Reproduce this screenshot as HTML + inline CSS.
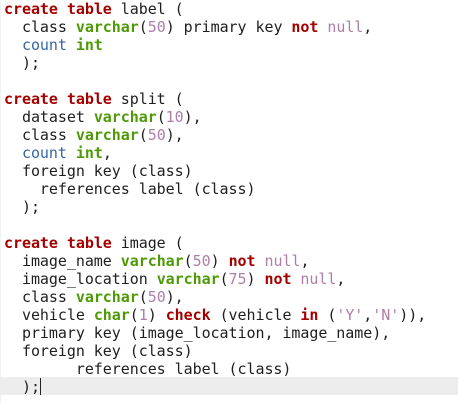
<!DOCTYPE html>
<html><head><style>
html,body{margin:0;padding:0;background:#fff;width:458px;height:403px;overflow:hidden}
pre{margin:0;position:absolute;left:4px;top:0;font-family:"DejaVu Sans Mono","Liberation Mono",monospace;font-size:15px;line-height:18px;letter-spacing:-0.05px;color:#1e1e1e}
.k{color:#a40000;font-weight:bold}
.t{color:#4e9a06;font-weight:bold}
.n{color:#ad7fa8}
.b{color:#3465a4}
.hl{position:absolute;left:0;top:377px;width:458px;height:18px;background:#ededed}
.cur{position:absolute;left:40px;top:378px;width:1px;height:17px;background:#222}
.edge{position:absolute;left:0;top:0;width:1px;height:403px;background:#f2f2f2}
</style></head><body>
<div class="edge"></div>
<div class="hl"></div>
<pre><span class="k">create</span> <span class="k">table</span> label (
  class <span class="t">varchar</span>(<span class="n">50</span>) primary key <span class="k">not</span> <span class="n">null</span>,
  <span class="b">count</span> <span class="t">int</span>
  );

<span class="k">create</span> <span class="k">table</span> split (
  dataset <span class="t">varchar</span>(<span class="n">10</span>),
  class <span class="t">varchar</span>(<span class="n">50</span>),
  <span class="b">count</span> <span class="t">int</span>,
  foreign key (class)
    references label (class)
  );

<span class="k">create</span> <span class="k">table</span> image (
  image_name <span class="t">varchar</span>(<span class="n">50</span>) <span class="k">not</span> <span class="n">null</span>,
  image_location <span class="t">varchar</span>(<span class="n">75</span>) <span class="k">not</span> <span class="n">null</span>,
  class <span class="t">varchar</span>(<span class="n">50</span>),
  vehicle <span class="t">char</span>(<span class="n">1</span>) <span class="k">check</span> (vehicle <span class="k">in</span> (<span class="n">'Y'</span>,<span class="n">'N'</span>)),
  primary key (image_location, image_name),
  foreign key (class)
        references label (class)
  );</pre>
<div class="cur"></div>
</body></html>
